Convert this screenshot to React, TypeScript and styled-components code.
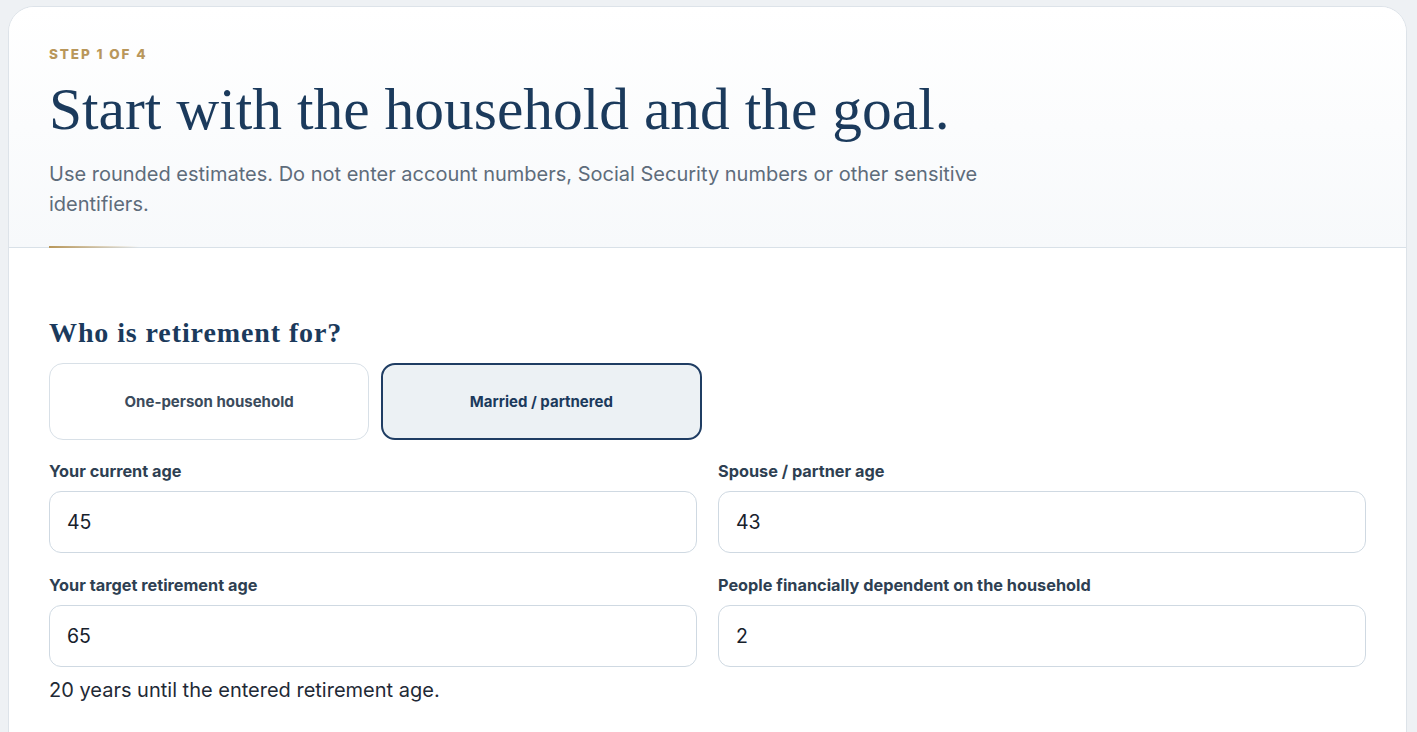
import React, { useState } from 'react';
import styled, { createGlobalStyle } from 'styled-components';

const GlobalStyle = createGlobalStyle`
  html, body {
    margin: 0;
    padding: 0;
    background: #eef1f4;
    font-family: Inter, "Noto Sans", sans-serif;
  }
  * {
    box-sizing: border-box;
  }
`;

const Page = styled.div`
  padding: 6px 10px 0 8px;
`;

const Card = styled.div`
  background: #fff;
  border: 1px solid #dde3e9;
  border-radius: 26px;
  overflow: hidden;
  min-height: 760px;
`;

const Header = styled.header`
  position: relative;
  padding: 38px 40px 28px;
  background: linear-gradient(180deg, #ffffff 0%, #f7f9fb 100%);
  border-bottom: 1px solid #d9e1e8;
`;

const Accent = styled.span`
  position: absolute;
  left: 40px;
  bottom: -1px;
  width: 90px;
  height: 2px;
  background: linear-gradient(90deg, #b8975a 0%, rgba(184, 151, 90, 0) 100%);
`;

const Eyebrow = styled.div`
  font-size: 13.5px;
  font-weight: 800;
  letter-spacing: 1.9px;
  color: #b9975b;
  text-transform: uppercase;
  line-height: 18px;
`;

const Title = styled.h1`
  margin: 12px 0 0;
  font-family: "Liberation Serif", Georgia, serif;
  font-weight: 400;
  font-size: 59.5px;
  line-height: 68px;
  color: #1b3a5c;
`;

const Lead = styled.p`
  margin: 16px 0 0;
  max-width: 980px;
  font-size: 20px;
  line-height: 30px;
  color: #5e6c7b;
`;

const Body = styled.section`
  padding: 69px 40px 40px;
`;

const SectionTitle = styled.h2`
  margin: 0 0 14px;
  font-family: "Liberation Serif", Georgia, serif;
  font-weight: 700;
  font-size: 28px;
  letter-spacing: 0.9px;
  line-height: 32px;
  color: #1b3a5c;
`;

const Options = styled.div`
  display: grid;
  grid-template-columns: repeat(4, 1fr);
  gap: 12px;
`;

const Option = styled.button<{ $active?: boolean }>`
  height: 77px;
  border-radius: 14px;
  border: ${(p) => (p.$active ? '2px solid #1f3d63' : '1px solid #d8e0e7')};
  background: ${(p) => (p.$active ? '#ecf1f4' : '#fff')};
  color: ${(p) => (p.$active ? '#1b3a5c' : '#3b4b5c')};
  font-family: Inter, sans-serif;
  font-size: 15px;
  font-weight: 700;
  cursor: pointer;
`;

const Fields = styled.div`
  display: grid;
  grid-template-columns: 1fr 1fr;
  column-gap: 21px;
  row-gap: 22px;
  margin-top: 21px;
`;

const Field = styled.label`
  display: flex;
  flex-direction: column;
`;

const Label = styled.span`
  font-size: 16.3px;
  font-weight: 700;
  line-height: 20px;
  color: #2e3f52;
  margin-bottom: 10px;
`;

const Input = styled.input`
  height: 62px;
  border: 1px solid #cfd9e2;
  border-radius: 12px;
  padding: 0 17px;
  font-family: Inter, sans-serif;
  font-size: 19.5px;
  color: #17212c;
  background: #fff;
  outline: none;
`;

const Hint = styled.p`
  margin: 10px 0 0;
  font-size: 20px;
  line-height: 26px;
  color: #1f2a36;
`;

export default function App() {
  const [household, setHousehold] = useState('married');
  const [age, setAge] = useState('45');
  const [spouseAge, setSpouseAge] = useState('43');
  const [retireAge, setRetireAge] = useState('65');
  const [dependents, setDependents] = useState('2');

  const years = Number(retireAge) - Number(age);

  return (
    <Page>
      <GlobalStyle />
      <Card>
        <Header>
          <Eyebrow>Step 1 of 4</Eyebrow>
          <Title>Start with the household and the goal.</Title>
          <Lead>
            Use rounded estimates. Do not enter account numbers, Social Security numbers or other sensitive
            identifiers.
          </Lead>
          <Accent />
        </Header>
        <Body>
          <SectionTitle>Who is retirement for?</SectionTitle>
          <Options>
            <Option $active={household === 'single'} onClick={() => setHousehold('single')}>
              One-person household
            </Option>
            <Option $active={household === 'married'} onClick={() => setHousehold('married')}>
              Married / partnered
            </Option>
          </Options>
          <Fields>
            <Field>
              <Label>Your current age</Label>
              <Input value={age} onChange={(e) => setAge(e.target.value)} />
            </Field>
            <Field>
              <Label>Spouse / partner age</Label>
              <Input value={spouseAge} onChange={(e) => setSpouseAge(e.target.value)} />
            </Field>
            <Field>
              <Label>Your target retirement age</Label>
              <Input value={retireAge} onChange={(e) => setRetireAge(e.target.value)} />
            </Field>
            <Field>
              <Label>People financially dependent on the household</Label>
              <Input value={dependents} onChange={(e) => setDependents(e.target.value)} />
            </Field>
          </Fields>
          <Hint>{years} years until the entered retirement age.</Hint>
        </Body>
      </Card>
    </Page>
  );
}
